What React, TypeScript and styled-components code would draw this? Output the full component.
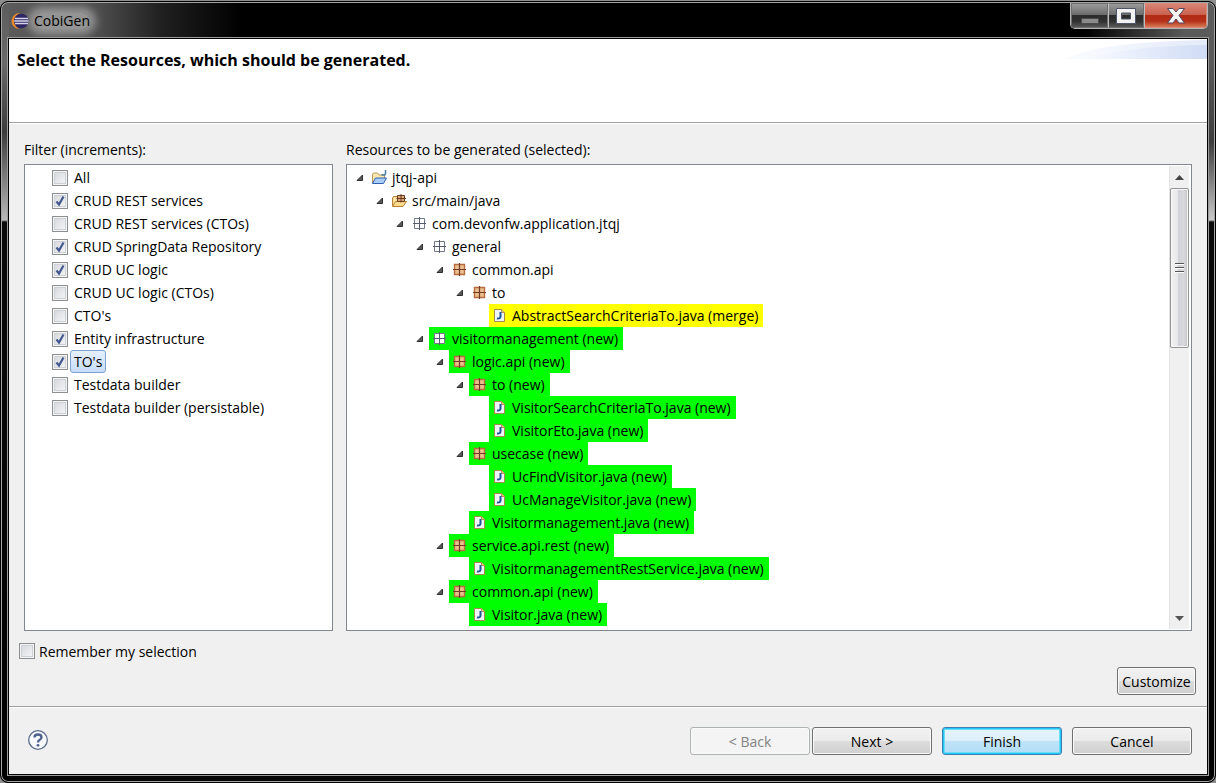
import React, { useId, useState } from "react";
import styled, { createGlobalStyle, css } from "styled-components";

const GlobalStyle = createGlobalStyle`
  * { box-sizing: border-box; }
  body {
    margin: 0;
    background: #8c8f8c;
    color: #000;
    font: 14px/22px "Open Sans", "Noto Sans", sans-serif;
  }
  #root { padding-top: 1px; }
  button, input { font: inherit; color: inherit; margin: 0; }
`;

const Window = styled.div`
  display: flex;
  flex-direction: column;
  min-height: calc(100vh - 1px);
  border: 1px solid #000;
  border-radius: 8px;
  padding: 1px 7px 7px;
  box-shadow: inset 0 0 0 1px #a4a4a4;
  background:
    linear-gradient(180deg, #5c5c5c 0, #6a6a6a 60px, #3c3c3c 130px, #b8b8b8 218px, #0a0a0a 220px, #000 100%) left / 8px 100% no-repeat,
    linear-gradient(180deg, #5c5c5c 0, #5a5a5a 60px, #3c3c3c 140px, #c8c8c8 218px, #0a0a0a 220px, #000 100%) right / 8px 100% no-repeat,
    linear-gradient(90deg, #5c5c5c 0, #4c4c4c 100px, #202020 160px, #000 240px, #000 calc(100% - 130px), #5a5a5a calc(100% - 30px)) top / 100% 60px no-repeat,
    #050505;
`;

const TitleBar = styled.header`
  display: flex;
  justify-content: space-between;
  height: 35px;
  padding-left: 3px;
`;

const Title = styled.div`
  display: flex;
  align-items: center;
  gap: 5px;
  height: 36px;
`;

const LogoSlot = styled.span`
  display: flex;
  z-index: 1;
`;

const TitleText = styled.h1`
  margin: 0;
  font-size: 14px;
  line-height: 16px;
  font-weight: 400;
  border-radius: 8px;
  background: rgba(165, 165, 165, 0.8);
  box-shadow: 0 0 8px 6px rgba(165, 165, 165, 0.8);
`;

const WindowButtons = styled.div`
  display: flex;
  height: 26px;
  border: 1px solid #b4b4b4;
  border-top: 0;
  border-radius: 0 0 5px 5px;
  overflow: hidden;
`;

const WindowButton = styled.button<{ $width: number; $close?: boolean }>`
  display: grid;
  place-items: center;
  width: ${(p) => p.$width}px;
  padding: 0;
  border: 1px solid ${(p) => (p.$close ? "#d98a7c" : "#6e6e6e")};
  background: ${(p) =>
    p.$close
      ? "linear-gradient(#d98475 0, #c9604e 48%, #b22a12 50%, #b5301a 75%, #d77a52 100%)"
      : "linear-gradient(#9a9a9a 0, #6b6b6b 48%, #2c2c2c 50%, #303030 75%, #585858 100%)"};
  & + & { border-left-color: #c0c0c0; }
`;

const Client = styled.main`
  flex: 1;
  display: flex;
  flex-direction: column;
  border: 1px solid #000;
  outline: 1px solid #9c9c9c;
  background: #f0f0f0;
`;

const Banner = styled.section`
  display: flex;
  justify-content: space-between;
  align-items: flex-start;
  height: 85px;
  padding-left: 8px;
  background: #fff;
  border-bottom: 1px solid #fff;
  box-shadow: inset 0 -1px 0 #a0a0a0;
`;

const Heading = styled.h2`
  margin: 10px 0 0;
  font-size: 16px;
  line-height: 22px;
  font-weight: 700;
`;

const Body = styled.section`
  flex: 1;
  display: flex;
  flex-direction: column;
  padding: 15px 11px 11px 10px;
  border-bottom: 1px solid #a0a0a0;
`;

const Columns = styled.div`
  flex: 1;
  display: grid;
  grid-template-columns: minmax(0, 309fr) minmax(0, 846fr);
  gap: 13px;
  padding: 0 4px 0 5px;
`;

const Column = styled.div`
  display: flex;
  flex-direction: column;
`;

const ColumnLabel = styled.h3`
  margin: 0 0 3px;
  font-size: 14px;
  line-height: 22px;
  font-weight: 400;
`;

const Panel = styled.div`
  flex: 1;
  display: flex;
  padding: 1px;
  border: 1px solid #828790;
  background: #fff;
`;

const List = styled.ul`
  flex: 1;
  min-width: 0;
  margin: 0;
  padding: 0;
  list-style: none;
`;

const TreeList = styled(List)`
  margin-left: -1px;
`;

const FilterRow = styled.li`
  display: flex;
  align-items: center;
  height: 23px;
  padding-left: 26px;
`;

const CheckLabel = styled.label<{ $selected?: boolean; $tight?: boolean }>`
  margin-left: ${(p) => (p.$tight ? 0 : 2)}px;
  padding: 0 3px;
  border: 1px solid transparent;
  border-radius: 3px;
  line-height: 21px;
  white-space: nowrap;
  ${(p) =>
    p.$selected &&
    css`
      border-color: #7da2ce;
      background: linear-gradient(#e6f0fd, #c6ddfb);
    `}
`;

const BoxWrap = styled.span`
  display: grid;
  width: 16px;
  height: 16px;
  & > * { grid-area: 1 / 1; }
`;

const Box = styled.input`
  appearance: none;
  width: 16px;
  height: 16px;
  border: 1px solid #8e8f8f;
  background: linear-gradient(135deg, #d2d5da, #f8f8f8);
  box-shadow: inset 0 0 0 1px #f4f4f4, inset 0 0 0 2px #cdd0d5;
`;

const Tick = styled.svg`
  pointer-events: none;
`;

const TreeRow = styled.li<{ $level: number }>`
  display: flex;
  align-items: center;
  height: 23px;
  padding-left: ${(p) => p.$level * 20}px;
`;

const Expander = styled.span`
  display: flex;
  justify-content: flex-end;
  width: 22px;
  padding-right: 6px;
`;

const fills = { none: "transparent", merge: "#ffff00", new: "#00ff00" };

const Node = styled.span<{ $state: keyof typeof fills }>`
  display: flex;
  align-items: center;
  gap: 4px;
  height: 23px;
  padding: 0 5px 0 3px;
  white-space: nowrap;
  background: ${(p) => fills[p.$state]};
`;

const ScrollBar = styled.div`
  display: flex;
  flex-direction: column;
  width: 20px;
  margin-right: 1px;
  border-left: 1px solid #e3e3e3;
  background: #f0f0f0;
`;

const ScrollButton = styled.button`
  display: grid;
  place-items: center;
  height: 22px;
  padding: 0;
  border: 0;
  background: none;
`;

const ScrollThumb = styled.div`
  display: flex;
  flex-direction: column;
  align-items: center;
  justify-content: center;
  gap: 2px;
  height: 160px;
  margin-bottom: auto;
  border: 1px solid #959595;
  border-radius: 2px;
  box-shadow: inset 0 0 0 1px #f6f6f6;
  background: linear-gradient(90deg, #f3f3f3 0, #e8e8eb 38%, #d2d3d8 42%, #d8d8dd 75%, #c4c4cc 100%);
`;

const Grip = styled.span`
  width: 9px;
  height: 2px;
  background: #555;
  border-bottom: 1px solid #fff;
`;

const Remember = styled.div`
  display: flex;
  align-items: center;
  height: 22px;
  margin-top: 9px;
`;

const CustomizeRow = styled.div`
  display: flex;
  justify-content: flex-end;
  margin-top: 5px;
`;

const PushButton = styled.button<{ $wide?: boolean; $primary?: boolean }>`
  width: ${(p) => (p.$wide ? 120 : 79)}px;
  height: 28px;
  padding: 1px 0 0;
  border: 1px solid ${(p) => (p.$primary ? "#3c7fb1" : "#707070")};
  border-radius: 3px;
  line-height: 25px;
  white-space: nowrap;
  background: ${(p) =>
    p.$primary
      ? "linear-gradient(#e6f4fc 0, #dcf0fb 48%, #c0e4f8 50%, #b0dcf5 100%)"
      : "linear-gradient(#f2f2f2 0, #ebebeb 48%, #dddddd 50%, #cfcfcf 100%)"};
  box-shadow: ${(p) =>
    p.$primary ? "inset 0 0 0 1px #22c8f5, inset 0 0 0 2px #6bdcfa" : "inset 0 0 0 1px #fafafa"};
  &:disabled {
    border-color: #adb2b5;
    background: #f4f4f4;
    color: #838383;
  }
`;

const Footer = styled.footer`
  display: flex;
  align-items: center;
  justify-content: space-between;
  height: 67px;
  padding: 0 15px 0 18px;
  border-top: 1px solid #fff;
`;

const HelpButton = styled.button`
  display: flex;
  padding: 0 0 2px;
  border: 0;
  background: none;
`;

const Actions = styled.div`
  display: flex;
  gap: 10px;
`;

const Steps = styled.div`
  display: flex;
  gap: 2px;
`;

const EclipseLogo = () => (
  <svg width="18" height="18" viewBox="0 0 18 18" aria-hidden="true">
    <path d="M9 1A8 8 0 0 0 8 17Q3 13 3.500 9Q3 4 9 1Z" fill="#e8892b" />
    <circle cx="10.300" cy="9" r="7.300" fill="#2f2763" />
    <path d="M4 6.500h13M3.200 9h14.400M4 11.500h13" stroke="#d5d3ea" strokeWidth="1.400" />
  </svg>
);

const BannerArt = () => (
  <svg width="141" height="20" viewBox="0 0 141 20" aria-hidden="true">
    <defs>
      <linearGradient id="swoosh">
        <stop offset="0" stopColor="#f8faff" />
        <stop offset="1" stopColor="#d0dcf5" />
      </linearGradient>
    </defs>
    <path d="M0 20Q30 3 141 1V20Z" fill="url(#swoosh)" opacity=".6" />
    <path d="M20 20Q70 6 141 6V20Z" fill="url(#swoosh)" />
  </svg>
);

const MinimizeGlyph = () => (
  <svg width="20" height="20" viewBox="0 0 20 20" aria-hidden="true">
    <path d="M1.500 12.500h17v5h-17z" fill="#8b8b8b" stroke="#4b4b4b" />
  </svg>
);
const MaximizeGlyph = () => (
  <svg width="20" height="18" viewBox="0 0 20 18" aria-hidden="true">
    <path d="M.5 1.500h19v15H.5zM5.500 6v6h9V6z" fill="#f2f2f2" fillRule="evenodd" stroke="#505468" />
  </svg>
);
const CloseGlyph = () => (
  <svg width="20" height="18" viewBox="0 0 20 18" aria-hidden="true">
    <path d="M1.500 1.500h5.500L10 5l3-3.500h5.500L13 8.500l5.500 7.500H13l-3-4-3 4H1.500L7 8.500z" fill="#f4f4f4" stroke="#54465c" />
  </svg>
);

const Arrow = () => (
  <svg width="7" height="7" viewBox="0 0 7 7" aria-hidden="true">
    <path d="M6.500 1v5.500h-5.500z" fill="#595959" stroke="#2e2e2e" />
  </svg>
);

type IconName = "project" | "source" | "empty" | "package" | "java";

const NodeIcon = ({ name }: { name: IconName }) => (
  <svg width="16" height="16" viewBox="0 0 16 16" aria-hidden="true">
    {name === "project" && (
      <>
        <path d="M.5 13V4.500L1.500 3h4L7 5h5.500v3" fill="#fbe9b0" stroke="#b8935a" />
        <path d="M.5 13.500L3.500 8h11l-3 5.500z" fill="#a9cdf5" stroke="#2f62b5" />
        <path d="M9.500 4.500q3.500 1.500 4-1V0" fill="none" stroke="#4a7fa8" strokeWidth="1.500" />
      </>
    )}
    {name === "source" && (
      <>
        <path d="M.5 13V5l1-1.500H5L6 5h6.500v3" fill="#fbe3a0" stroke="#b87f33" />
        <path d="M.5 13.500L3.500 8.500h11L11 13.500z" fill="#fbdc8c" stroke="#b87f33" />
        <path d="M5.500 2.500h7v6h-7z" fill="#dcab77" stroke="#6b3b22" />
        <path d="M9 1v8.500M4.500 5.500h9.500" fill="none" stroke="#6b3b22" />
      </>
    )}
    {name === "empty" && (
      <>
        <path d="M2.500 2.500h10v10h-10z" fill="#fff" stroke="#737888" />
        <path d="M7.500 1v13M1 7.500h13" stroke="#565b70" />
      </>
    )}
    {name === "package" && (
      <>
        <path d="M2.500 2.500h10v10h-10z" fill="#ecc08c" stroke="#b66b40" strokeWidth="1.400" />
        <path d="M7.500 1v13M1 7.500h13" stroke="#713a28" strokeWidth="1.200" />
      </>
    )}
    {name === "java" && (
      <>
        <path d="M2.500 1.500h7l3 3v9h-10z" fill="#eef5fd" stroke="#a58a4c" />
        <path d="M9.500 1.500v3h3" fill="#e9c987" stroke="#b8935a" />
        <path d="M8.500 4V8.500q0 2.500-3.500 2" fill="none" stroke="#1f5796" strokeWidth="2" />
      </>
    )}
  </svg>
);

const CheckBox = ({
  label,
  initial,
  selected,
  tight,
}: {
  label: string;
  initial?: boolean;
  selected?: boolean;
  tight?: boolean;
}) => {
  const id = useId();
  const [checked, setChecked] = useState(!!initial);
  return (
    <>
      <BoxWrap>
        <Box id={id} type="checkbox" checked={checked} onChange={() => setChecked(!checked)} />
        {checked && (
          <Tick width="16" height="16" viewBox="0 0 16 16" aria-hidden="true">
            <path d="M4.500 8.500L7 11.500L11.500 3.500" fill="none" stroke="#44588f" strokeWidth="2.200" />
          </Tick>
        )}
      </BoxWrap>
      <CheckLabel htmlFor={id} $selected={selected} $tight={tight}>
        {label}
      </CheckLabel>
    </>
  );
};

const filters: { label: string; checked?: boolean; selected?: boolean }[] = [
  { label: "All" },
  { label: "CRUD REST services", checked: true },
  { label: "CRUD REST services (CTOs)" },
  { label: "CRUD SpringData Repository", checked: true },
  { label: "CRUD UC logic", checked: true },
  { label: "CRUD UC logic (CTOs)" },
  { label: "CTO's" },
  { label: "Entity infrastructure", checked: true },
  { label: "TO's", checked: true, selected: true },
  { label: "Testdata builder" },
  { label: "Testdata builder (persistable)" },
];

const resources: [number, IconName, string, keyof typeof fills][] = [
  [0, "project", "jtqj-api", "none"],
  [1, "source", "src/main/java", "none"],
  [2, "empty", "com.devonfw.application.jtqj", "none"],
  [3, "empty", "general", "none"],
  [4, "package", "common.api", "none"],
  [5, "package", "to", "none"],
  [6, "java", "AbstractSearchCriteriaTo.java (merge)", "merge"],
  [3, "empty", "visitormanagement (new)", "new"],
  [4, "package", "logic.api (new)", "new"],
  [5, "package", "to (new)", "new"],
  [6, "java", "VisitorSearchCriteriaTo.java (new)", "new"],
  [6, "java", "VisitorEto.java (new)", "new"],
  [5, "package", "usecase (new)", "new"],
  [6, "java", "UcFindVisitor.java (new)", "new"],
  [6, "java", "UcManageVisitor.java (new)", "new"],
  [5, "java", "Visitormanagement.java (new)", "new"],
  [4, "package", "service.api.rest (new)", "new"],
  [5, "java", "VisitormanagementRestService.java (new)", "new"],
  [4, "package", "common.api (new)", "new"],
  [5, "java", "Visitor.java (new)", "new"],
];

export default function App() {
  return (
    <>
      <GlobalStyle />
      <Window>
        <TitleBar>
          <Title>
            <LogoSlot>
              <EclipseLogo />
            </LogoSlot>
            <TitleText>CobiGen</TitleText>
          </Title>
          <WindowButtons>
            <WindowButton $width={37} aria-label="Minimize"><MinimizeGlyph /></WindowButton>
            <WindowButton $width={36} aria-label="Maximize"><MaximizeGlyph /></WindowButton>
            <WindowButton $width={63} $close aria-label="Close"><CloseGlyph /></WindowButton>
          </WindowButtons>
        </TitleBar>
        <Client>
          <Banner>
            <Heading>Select the Resources, which should be generated.</Heading>
            <BannerArt />
          </Banner>
          <Body>
            <Columns>
              <Column>
                <ColumnLabel>Filter (increments):</ColumnLabel>
                <Panel>
                  <List>
                    {filters.map((f) => (
                      <FilterRow key={f.label}>
                        <CheckBox label={f.label} initial={f.checked} selected={f.selected} />
                      </FilterRow>
                    ))}
                  </List>
                </Panel>
              </Column>
              <Column>
                <ColumnLabel>Resources to be generated (selected):</ColumnLabel>
                <Panel>
                  <TreeList role="tree">
                    {resources.map(([level, icon, label, state]) => (
                      <TreeRow key={label} role="treeitem" aria-level={level + 1} $level={level}>
                        <Expander>{icon !== "java" && <Arrow />}</Expander>
                        <Node $state={state}>
                          <NodeIcon name={icon} />
                          {label}
                        </Node>
                      </TreeRow>
                    ))}
                  </TreeList>
                  <ScrollBar>
                    <ScrollButton aria-label="Scroll up">
                      <svg width="9" height="5" viewBox="0 0 9 5"><path d="M0 5L4.500 0L9 5z" fill="#444" /></svg>
                    </ScrollButton>
                    <ScrollThumb>
                      <Grip /><Grip /><Grip />
                    </ScrollThumb>
                    <ScrollButton aria-label="Scroll down">
                      <svg width="9" height="5" viewBox="0 0 9 5"><path d="M0 0L4.500 5L9 0z" fill="#555" /></svg>
                    </ScrollButton>
                  </ScrollBar>
                </Panel>
              </Column>
            </Columns>
            <Remember>
              <CheckBox label="Remember my selection" tight />
            </Remember>
            <CustomizeRow>
              <PushButton>Customize</PushButton>
            </CustomizeRow>
          </Body>
          <Footer>
            <HelpButton aria-label="Help">
              <svg width="22" height="22" viewBox="0 0 22 22" aria-hidden="true">
                <circle cx="11" cy="11" r="9.300" fill="#f8f9fb" stroke="#5b6d8e" strokeWidth="1.300" />
                <path d="M7.500 8.500Q7.500 5.500 11 5.500T14.500 8.300Q14.500 10 12.500 11Q11 11.800 11 13.500" fill="none" stroke="#4d628c" strokeWidth="2.400" />
                <circle cx="11" cy="16.300" r="1.400" fill="#4d628c" />
              </svg>
            </HelpButton>
            <Actions>
              <Steps>
                <PushButton $wide disabled>&lt; Back</PushButton>
                <PushButton $wide>Next &gt;</PushButton>
              </Steps>
              <PushButton $wide $primary>Finish</PushButton>
              <PushButton $wide>Cancel</PushButton>
            </Actions>
          </Footer>
        </Client>
      </Window>
    </>
  );
}
